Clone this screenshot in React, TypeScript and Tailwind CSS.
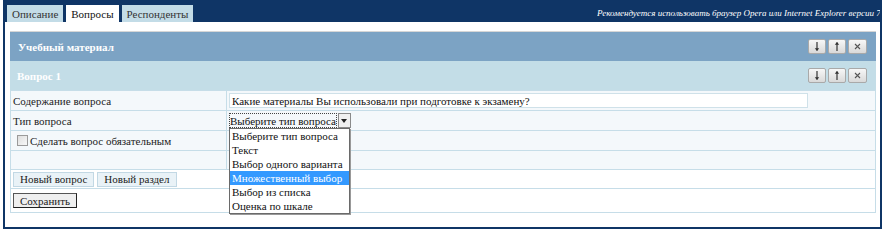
import React from 'react';

// маленькие кнопки ↓ ↑ × в шапках
const Arrow = ({ up }: { up?: boolean }) => (
  <svg width="8" height="11" viewBox="0 0 8 11" className={up ? 'rotate-180' : ''}>
    <path d="M4 1V9.5" stroke="#333" strokeWidth="1.2" fill="none" />
    <path d="M1.8 7.2L4 10L6.2 7.2Z" fill="#333" />
  </svg>
);

const Cross = () => (
  <svg width="7" height="7" viewBox="0 0 7 7">
    <path d="M1 1L6 6M6 1L1 6" stroke="#555" strokeWidth="1.1" />
  </svg>
);

const HeadButtons = () => (
  <div className="flex gap-[2px]">
    <div className="w-[18px] h-[15px] flex items-center justify-center border border-[#a9a9a9] rounded-[2px] bg-gradient-to-b from-[#f7f7f7] to-[#d9d9d9]">
      <Arrow />
    </div>
    <div className="w-[18px] h-[15px] flex items-center justify-center border border-[#a9a9a9] rounded-[2px] bg-gradient-to-b from-[#f7f7f7] to-[#d9d9d9]">
      <Arrow up />
    </div>
    <div className="w-[19px] h-[15px] flex items-center justify-center border border-[#a9a9a9] rounded-[2px] bg-gradient-to-b from-[#f7f7f7] to-[#d9d9d9]">
      <Cross />
    </div>
  </div>
);

const options = [
  'Выберите тип вопроса',
  'Текст',
  'Выбор одного варианта',
  'Множественный выбор',
  'Выбор из списка',
  'Оценка по шкале',
];

export default function App() {
  return (
    <div className="w-[888px] h-[241px] bg-white text-[11px] leading-[14px] text-[#222] font-['Liberation_Serif','Times_New_Roman',serif] overflow-hidden">
      <div className="ml-[3px] w-[879px] h-[229px] bg-[#0f3566] flex flex-col">
        {/* верхняя полоса с вкладками */}
        <div className="h-[22px] flex items-end pl-[4px] pr-[2px] shrink-0">
          <div className="flex gap-[3px] items-end">
            <div className="h-[17px] px-[5px] bg-[#c3dce7] text-[#333] flex items-center">Описание</div>
            <div className="h-[17px] px-[5px] bg-white text-[#111] flex items-center">Вопросы</div>
            <div className="h-[17px] px-[5px] bg-[#c3dce7] text-[#333] flex items-center">Респонденты</div>
          </div>
          <div className="ml-auto w-[283px] overflow-hidden whitespace-nowrap self-center pt-[3px] text-[9px] italic text-white">
            Рекомендуется использовать браузер Opera или Internet Explorer версии 7
          </div>
        </div>

        {/* контент */}
        <div className="flex-1 mx-[2px] mb-[2px] bg-white pt-[9px] pl-[5px] pr-[4px]">
          <div className="h-[30px] bg-[#7ca3c4] flex items-center justify-between pl-[8px] pr-[9px] border-t border-[#d6d6d6]">
            <span className="text-white font-bold">Учебный материал</span>
            <HeadButtons />
          </div>
          <div className="h-[29px] bg-[#c3dde7] flex items-center justify-between pl-[7px] pr-[9px]">
            <span className="text-white font-bold">Вопрос 1</span>
            <HeadButtons />
          </div>

          <div className="border-x border-[#c6dde8]">
            <div className="flex h-[21px] bg-[#f4f8fb] border-y border-[#c6dde8]">
              <div className="w-[216px] pl-[2px] border-r border-[#c6dde8] flex items-center">Содержание вопроса</div>
              <div className="flex-1 flex items-center pl-[2px]">
                <div className="w-[579px] h-[15px] bg-white border border-[#cfe1e9] pl-[2px] flex items-center text-[#111]">
                  Какие материалы Вы использовали при подготовке к экзамену?
                </div>
              </div>
            </div>

            <div className="flex h-[20px] bg-[#f4f8fb] border-b border-[#c6dde8]">
              <div className="w-[216px] pl-[2px] border-r border-[#c6dde8] flex items-center">Тип вопроса</div>
              <div className="flex-1 flex items-center pl-[2px]">
                <div className="relative w-[122px] h-[16px] flex items-center">
                  <div className="flex-1 h-[15px] border border-dotted border-[#444] flex items-center text-[#111] whitespace-nowrap">
                    Выберите тип вопроса
                  </div>
                  <div className="w-[14px] h-[15px] ml-[1px] border border-[#8a8a8a] bg-[#f0f0f0] flex items-center justify-center">
                    <div className="w-0 h-0 border-x-[3px] border-x-transparent border-t-[4px] border-t-[#222]" />
                  </div>
                  {/* раскрытый список */}
                  <div className="absolute left-0 top-[15px] w-[121px] bg-white border border-[#6a6a6a] shadow-[1px_1px_0_#999] z-10">
                    {options.map((o) => (
                      <div
                        key={o}
                        className={
                          o === 'Множественный выбор'
                            ? 'h-[14px] pl-[2px] bg-[#3399ff] text-white whitespace-nowrap'
                            : 'h-[14px] pl-[2px] text-[#111] whitespace-nowrap'
                        }
                      >
                        {o}
                      </div>
                    ))}
                  </div>
                </div>
              </div>
            </div>

            <div className="flex h-[20px] bg-[#f4f8fb] border-b border-[#c6dde8]">
              <div className="w-[216px] pl-[6px] border-r border-[#c6dde8] flex items-center gap-[2px]">
                <div className="w-[11px] h-[11px] border border-[#9a9a9a] bg-gradient-to-br from-[#dedede] to-[#f8f8f8]" />
                <span>Сделать вопрос обязательным</span>
              </div>
              <div className="flex-1" />
            </div>

            <div className="flex h-[19px] bg-[#f4f8fb] border-b border-[#c6dde8]">
              <div className="w-[216px] border-r border-[#c6dde8]" />
              <div className="flex-1" />
            </div>

            <div className="h-[19px] flex items-center gap-[3px] pl-[2px] border-b border-[#c6dde8]">
              <div className="h-[15px] px-[6px] bg-[#e9f2f7] border border-[#c2d8e4] flex items-center">Новый вопрос</div>
              <div className="h-[15px] px-[6px] bg-[#e9f2f7] border border-[#c2d8e4] flex items-center">Новый раздел</div>
            </div>

            <div className="h-[24px] flex items-center pl-[2px] border-b border-[#c6dde8]">
              <div className="h-[15px] px-[6px] bg-[#efefef] border border-[#555] border-r-[#222] border-b-[#222] flex items-center">
                Сохранить
              </div>
            </div>
          </div>
        </div>
      </div>
    </div>
  );
}
